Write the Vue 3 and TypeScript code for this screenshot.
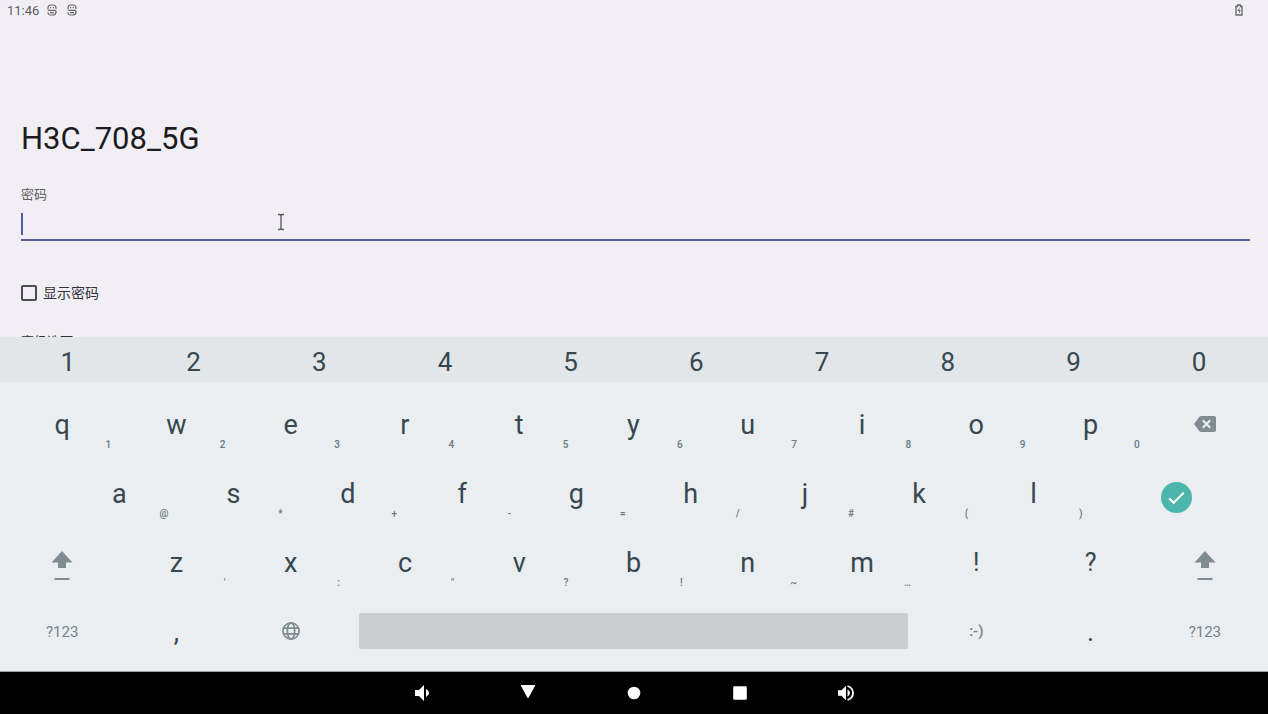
<script setup lang="ts">
import { ref } from 'vue'

interface Key {
  label: string
  hint?: string
  kind?: 'letter' | 'symbol' | 'mode' | 'shift' | 'delete' | 'enter' | 'globe' | 'space' | 'smile'
  name?: string
}

const network = 'H3C_708_5G'
const password = ref('')
const showPassword = ref(false)

const letters = (text: string, hints: string): Key[] =>
  [...text].map((label, i) => ({ label, hint: [...hints][i], kind: 'letter' }))

const digits = [...'1234567890']

const shift: Key = { label: '', kind: 'shift', name: 'Shift' }
const mode: Key = { label: '?123', kind: 'mode' }

const rows: { id: string; keys: Key[] }[] = [
  {
    id: 'top',
    keys: [...letters('qwertyuiop', '1234567890'), { label: '', kind: 'delete', name: 'Delete' }],
  },
  {
    id: 'home',
    keys: [...letters('asdfghjkl', '@*+-=/#()'), { label: '', kind: 'enter', name: 'Done' }],
  },
  {
    id: 'lower',
    keys: [
      shift,
      ...letters('zxcvbnm', '\':"?!~…'),
      { label: '!', kind: 'symbol' },
      { label: '?', kind: 'symbol' },
      shift,
    ],
  },
  {
    id: 'bottom',
    keys: [
      mode,
      { label: ',', kind: 'letter' },
      { label: '', kind: 'globe', name: 'Language' },
      { label: '', kind: 'space', name: 'Space' },
      { label: ':-)', kind: 'smile' },
      { label: '.', kind: 'letter' },
      mode,
    ],
  },
]

function press(key: Key) {
  if (key.kind === 'letter' || key.kind === 'symbol') password.value += key.label
  else if (key.kind === 'space') password.value += ' '
  else if (key.kind === 'delete') password.value = password.value.slice(0, -1)
}
</script>

<template>
  <div class="screen">
    <header class="status">
      <span class="time">11:46</span>
      <svg v-for="n in 2" :key="n" class="status-icon" viewBox="0 0 10 12" aria-hidden="true">
        <path d="M1 5V4Q1 1 4 1H6Q9 1 9 4V5M1 5.500Q1 6.300 2 6.300H8Q9 6.300 9 7.300V8Q9 11 6 11H4Q1 11 1 8.300" />
        <path d="M3 3.700H4.200M5.800 3.700H7M3 8.700H7" />
      </svg>
      <svg class="battery" viewBox="0 0 8 12" aria-hidden="true">
        <path d="M1 2.500H2.500V1H5.500V2.500H7V11H1Z" />
        <path class="bolt" d="M4.600 3.500L2.400 7H4V9.800L5.800 6.200H4.400Z" />
      </svg>
    </header>

    <main class="form">
      <h1>{{ network }}</h1>
      <label class="caption" for="password">密码</label>
      <div class="field">
        <span class="caret"></span>
        <input id="password" v-model="password" :type="showPassword ? 'text' : 'password'" autocomplete="off" />
      </div>
      <label class="check">
        <input v-model="showPassword" type="checkbox" />
        <span>显示密码</span>
      </label>
      <button class="advanced" type="button">高级选项</button>
      <svg class="pointer" viewBox="0 0 8 18" aria-hidden="true">
        <path d="M1 1.500H3L4 2.500L5 1.500H7M4 2.500V15.500M1 16.500H3L4 15.500L5 16.500H7" />
      </svg>
    </main>

    <section class="keyboard">
      <div class="digits">
        <button v-for="d in digits" :key="d" type="button" @click="password += d">{{ d }}</button>
      </div>
      <div class="rows">
        <div v-for="row in rows" :key="row.id" class="row" :class="row.id">
          <button
            v-for="(key, i) in row.keys"
            :key="i"
            type="button"
            class="key"
            :class="key.kind"
            :aria-label="key.name"
            @click="press(key)"
          >
            <svg v-if="key.kind === 'delete'" class="icon-delete" viewBox="0 0 22 16">
              <path fill="#7f8c92" d="M7 0H20Q22 0 22 2V14Q22 16 20 16H7Q6 16 5.300 15L.5 8.800Q0 8 .5 7.200L5.300 1Q6 0 7 0Z" />
              <path stroke="#eaeef1" stroke-width="2" d="M8.800 4.300L16.200 11.700M16.200 4.300L8.800 11.700" />
            </svg>
            <span v-else-if="key.kind === 'enter'" class="done">
              <svg viewBox="0 0 31 31">
                <path fill="none" stroke="#fff" stroke-width="2" d="M8.200 16.500L12.600 20.800L22.800 10.800" />
              </svg>
            </span>
            <svg v-else-if="key.kind === 'shift'" class="icon-shift" viewBox="0 0 22 30">
              <path fill="#7f8c92" d="M11 0L21.500 11.500H15V17H7V11.500H.5ZM3.500 27H18.500V29H3.500Z" />
            </svg>
            <svg v-else-if="key.kind === 'globe'" class="icon-globe" viewBox="0 0 18 18">
              <g fill="none" stroke="#7f8c92" stroke-width="1.700">
                <circle cx="9" cy="9" r="8.100" />
                <ellipse cx="9" cy="9" rx="3.700" ry="8.100" />
                <path d="M1.500 6.200H16.500M1.500 11.800H16.500" />
              </g>
            </svg>
            <span v-else-if="key.kind === 'space'" class="bar"></span>
            <template v-else>{{ key.label }}</template>
            <span v-if="key.hint" class="hint" aria-hidden="true">{{ key.hint }}</span>
          </button>
        </div>
      </div>
    </section>

    <nav class="nav">
      <button type="button" aria-label="Volume down">
        <svg viewBox="0 0 18 18"><path d="M2 6H6L11 1V17L6 12H2ZM13 5Q16 6.500 16 9Q16 11.500 13 13Z" /></svg>
      </button>
      <button type="button" aria-label="Back">
        <svg viewBox="0 0 18 18"><path d="M2.500 1H15.500Q16.500 1 16 2L9.700 13.500Q9 14.500 8.300 13.500L2 2Q1.500 1 2.500 1Z" /></svg>
      </button>
      <button type="button" aria-label="Home">
        <svg viewBox="0 0 18 18"><circle cx="9" cy="9" r="6.300" /></svg>
      </button>
      <button type="button" aria-label="Recent apps">
        <svg viewBox="0 0 18 18"><rect x="2.200" y="2.200" width="13.600" height="13.600" rx="1.200" /></svg>
      </button>
      <button type="button" aria-label="Volume up">
        <svg viewBox="0 0 18 18">
          <path d="M1 6.200H4.500L9 1.700V16.300L4.500 11.800H1ZM10.500 5.500Q13 6.500 13 9Q13 11.500 10.500 12.500Z" />
          <path fill="none" stroke="#fff" stroke-width="1.800" d="M10.500 2Q16 3.800 16 9Q16 14.200 10.500 16" />
        </svg>
      </button>
    </nav>
  </div>
</template>

<style>
body {
  margin: 0;
  background: #000;
}
</style>

<style scoped>
.screen {
  display: flex;
  flex-direction: column;
  height: 100vh;
  overflow: hidden;
  background: #f1eff5;
  color: #1c1b20;
  font-family: Roboto, "Noto Sans CJK SC", sans-serif;
}

button {
  padding: 0;
  border: 0;
  background: none;
  color: inherit;
  font: inherit;
  cursor: pointer;
}

svg {
  display: block;
}

.status {
  display: flex;
  flex: none;
  align-items: center;
  gap: 10px;
  height: 20px;
  padding: 0 25px 0 7px;
  color: #5b5a60;
  font-size: 13px;
}

.status-icon {
  width: 10px;
  height: 12px;
  fill: none;
  stroke: #66656a;
  stroke-width: 1.2;
}

.time {
  margin-right: -2px;
}

.battery {
  width: 8px;
  height: 12px;
  margin-left: auto;
  fill: none;
  stroke: #66656a;
  stroke-width: 1.3;
}

.battery .bolt {
  fill: #66656a;
  stroke: none;
}

.form {
  position: relative;
  display: flex;
  flex: 1;
  flex-direction: column;
  align-items: flex-start;
  min-height: 0;
  padding: 99px 18px 0 21px;
  overflow: hidden;
}

h1 {
  margin: 0;
  font-size: 31px;
  font-weight: 400;
  line-height: 40px;
}

.caption {
  margin-top: 26px;
  color: #5c5b61;
  font-size: 13px;
  line-height: 20px;
}

.field {
  display: flex;
  flex: none;
  align-self: stretch;
  align-items: center;
  height: 30px;
  margin-top: 4px;
  border-bottom: 2px solid #535c9c;
}

.caret {
  width: 2px;
  height: 22px;
  background: #535c9c;
}

.field input {
  flex: 1;
  min-width: 0;
  padding: 0;
  border: 0;
  outline: 0;
  background: none;
  color: inherit;
  font: inherit;
  caret-color: transparent;
}

.check {
  display: flex;
  flex: none;
  align-items: center;
  gap: 6px;
  margin-top: 42px;
  color: #333238;
  font-size: 14px;
  line-height: 20px;
}

.check input {
  width: 16px;
  height: 16px;
  margin: 0;
  border: 2px solid #4c4b51;
  border-radius: 2px;
  appearance: none;
}

.check input:checked {
  background: #535c9c;
}

.advanced {
  flex: none;
  margin-top: 29px;
  color: #333238;
  font-size: 13px;
  line-height: 20px;
}

.pointer {
  position: absolute;
  top: 193px;
  left: 277px;
  width: 8px;
  height: 18px;
  fill: none;
  stroke: #55545a;
  stroke-width: 1.3;
}

.keyboard {
  flex: none;
  border-bottom: 1px solid #9da1a3;
  background: #eaeef1;
  color: #37474f;
}

.digits {
  display: flex;
  height: 45px;
  padding: 0 6px 0 5px;
  background: #e2e6e9;
}

.digits button {
  flex: 1;
  padding-top: 5px;
  font-size: 26px;
  line-height: 40px;
}

.rows {
  padding: 7px 6px 6px 5px;
}

.row {
  display: grid;
  grid-template-columns: repeat(22, 1fr);
  height: 69px;
}

.key {
  position: relative;
  display: flex;
  grid-column: span 2;
  align-items: center;
  justify-content: center;
  min-width: 0;
  font-size: 27px;
  line-height: 32px;
}

.key.letter,
.key.symbol,
.key.mode {
  padding-top: 2px;
}

.home .key:first-child {
  grid-column: 2 / span 2;
}

.key.enter {
  grid-column: span 3;
}

.key.space {
  grid-column: span 10;
  padding: 0 11px;
}

.key.symbol {
  font-size: 25px;
}

.key.mode,
.key.smile {
  color: #75838a;
  font-size: 15px;
}

.key.smile {
  font-weight: 500;
}

.hint {
  position: absolute;
  right: 8px;
  bottom: 7px;
  color: #6b7980;
  font-size: 10px;
  font-weight: 500;
  line-height: 12px;
}

.icon-delete {
  width: 22px;
  height: 16px;
}

.done {
  width: 31px;
  height: 31px;
  margin-top: 10px;
  border-radius: 50%;
  background: #4db6ac;
}

.icon-shift {
  width: 22px;
  height: 30px;
  margin-top: 8px;
}

.icon-globe {
  width: 18px;
  height: 18px;
}

.bar {
  width: 100%;
  height: 36px;
  border-radius: 2px;
  background: #c9cdd0;
}

.nav {
  display: flex;
  flex: none;
  justify-content: center;
  height: 42px;
  background: #000;
}

.nav button {
  display: flex;
  align-items: center;
  justify-content: center;
  width: 106px;
}

.nav svg {
  width: 18px;
  height: 18px;
  fill: #fff;
}
</style>
